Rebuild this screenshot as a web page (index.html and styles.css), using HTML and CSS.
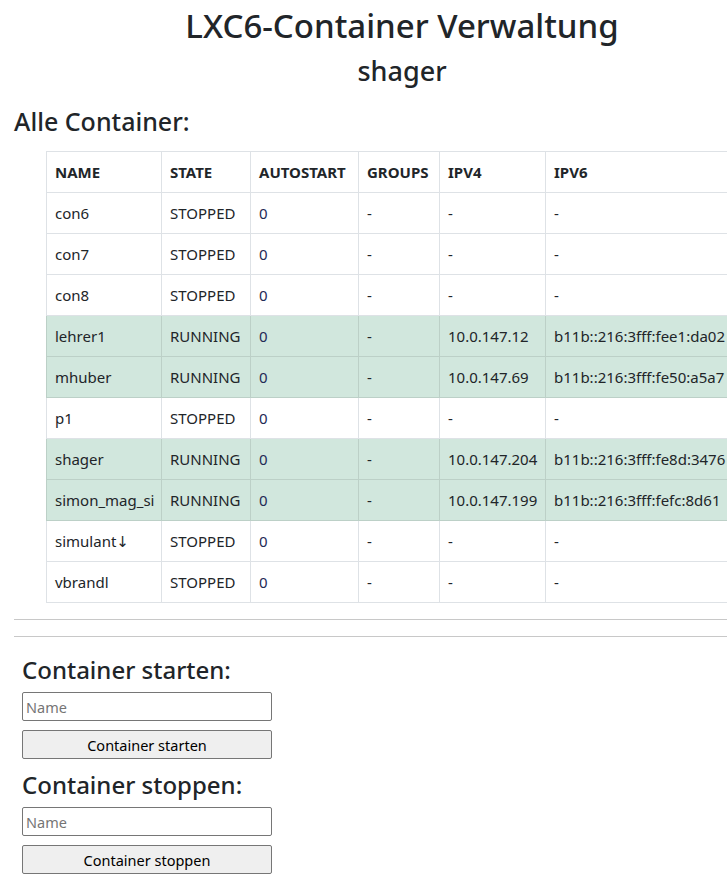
FILE: index.html
```html
<!DOCTYPE html>
<html lang="de">
<head>
<meta charset="utf-8">
<title>LXC6-Container Verwaltung</title>
<link rel="stylesheet" href="styles.css">
</head>
<body>
<div class="page">
  <header class="title-block">
    <h1 class="title">LXC6-Container Verwaltung</h1>
    <h2 class="subtitle">shager</h2>
  </header>

  <h3 class="section-title">Alle Container:</h3>

  <table class="containers">
    <colgroup>
      <col class="c-name">
      <col class="c-state">
      <col class="c-auto">
      <col class="c-groups">
      <col class="c-ipv4">
      <col class="c-ipv6">
    </colgroup>
    <thead>
      <tr><th>NAME</th><th>STATE</th><th>AUTOSTART</th><th>GROUPS</th><th>IPV4</th><th>IPV6</th></tr>
    </thead>
    <tbody>
      <tr><td>con6</td><td>STOPPED</td><td class="num">0</td><td>-</td><td>-</td><td>-</td></tr>
      <tr><td>con7</td><td>STOPPED</td><td class="num">0</td><td>-</td><td>-</td><td>-</td></tr>
      <tr><td>con8</td><td>STOPPED</td><td class="num">0</td><td>-</td><td>-</td><td>-</td></tr>
      <tr class="running"><td>lehrer1</td><td>RUNNING</td><td class="num">0</td><td>-</td><td>10.0.147.12</td><td>b11b::216:3fff:fee1:da02</td></tr>
      <tr class="running"><td>mhuber</td><td>RUNNING</td><td class="num">0</td><td>-</td><td>10.0.147.69</td><td>b11b::216:3fff:fe50:a5a7</td></tr>
      <tr><td>p1</td><td>STOPPED</td><td class="num">0</td><td>-</td><td>-</td><td>-</td></tr>
      <tr class="running"><td>shager</td><td>RUNNING</td><td class="num">0</td><td>-</td><td>10.0.147.204</td><td>b11b::216:3fff:fe8d:3476</td></tr>
      <tr class="running"><td>simon_mag_si</td><td>RUNNING</td><td class="num">0</td><td>-</td><td>10.0.147.199</td><td>b11b::216:3fff:fefc:8d61</td></tr>
      <tr><td>simulant↓</td><td>STOPPED</td><td class="num">0</td><td>-</td><td>-</td><td>-</td></tr>
      <tr><td>vbrandl</td><td>STOPPED</td><td class="num">0</td><td>-</td><td>-</td><td>-</td></tr>
    </tbody>
  </table>

  <hr class="rule rule-first">
  <hr class="rule rule-second">

  <form class="action-form">
    <h3 class="form-title">Container starten:</h3>
    <input class="field" type="text" placeholder="Name">
    <button class="btn" type="button">Container starten</button>
  </form>

  <form class="action-form">
    <h3 class="form-title form-title-next">Container stoppen:</h3>
    <input class="field" type="text" placeholder="Name">
    <button class="btn" type="button">Container stoppen</button>
  </form>
</div>
</body>
</html>
```

FILE: styles.css
```css
html {
  overflow: hidden;
}

body {
  margin: 0;
  font-family: "Noto Sans", "Open Sans", "DejaVu Sans", sans-serif;
  color: #212529;
  background: #ffffff;
}

.page {
  padding: 6px 0 0 14px;
}

.title-block {
  width: 776px;
  text-align: center;
}

.title {
  margin: 0;
  font-size: 33px;
  line-height: 40px;
  font-weight: 500;
}

.subtitle {
  margin: 9px 0 0;
  font-size: 27px;
  line-height: 32px;
  font-weight: 500;
}

.section-title {
  margin: 19px 0 0;
  font-size: 25px;
  line-height: 30px;
  font-weight: 500;
}

.containers {
  margin: 15px 0 0 32px;
  border-collapse: collapse;
  table-layout: fixed;
  width: 690px;
  font-size: 15px;
  line-height: 24px;
}

.c-name { width: 115px; }
.c-state { width: 89px; }
.c-auto { width: 108px; }
.c-groups { width: 81px; }
.c-ipv4 { width: 106px; }
.c-ipv6 { width: 191px; }

.containers th,
.containers td {
  border: 1px solid #dee2e6;
  padding: 8px;
  text-align: left;
  white-space: nowrap;
  overflow: hidden;
}

.containers th {
  font-weight: 700;
  color: #212529;
}

.containers td.num {
  color: #232a55;
}

.containers tr.running td {
  background: #d1e7dd;
  border-color: #bcd0c7;
}

.rule {
  margin: 0;
  border: 0;
  border-top: 1px solid #c8c8c8;
  height: 0;
}

.rule-first {
  margin-top: 16px;
}

.rule-second {
  margin-top: 16px;
}

.action-form {
  margin: 0 0 0 8px;
  width: 250px;
  display: flex;
  flex-direction: column;
}

.form-title {
  margin: 18px 0 0;
  font-size: 24px;
  line-height: 29px;
  font-weight: 500;
}

.form-title-next {
  margin-top: 11px;
}

.field {
  margin: 8px 0 0;
  box-sizing: border-box;
  width: 250px;
  height: 29px;
  padding: 0 3px;
  border: 1px solid #767676;
  border-radius: 2px;
  font-family: "Noto Sans", "Open Sans", sans-serif;
  font-size: 14.5px;
  color: #212529;
  background: #ffffff;
}

.field::placeholder {
  color: #757575;
}

.btn {
  margin: 9px 0 0;
  box-sizing: border-box;
  width: 250px;
  height: 29px;
  padding: 0;
  border: 1px solid #767676;
  border-radius: 2px;
  background: #efefef;
  font-family: "Noto Sans", "Open Sans", sans-serif;
  font-size: 14.5px;
  color: #000000;
}
```
